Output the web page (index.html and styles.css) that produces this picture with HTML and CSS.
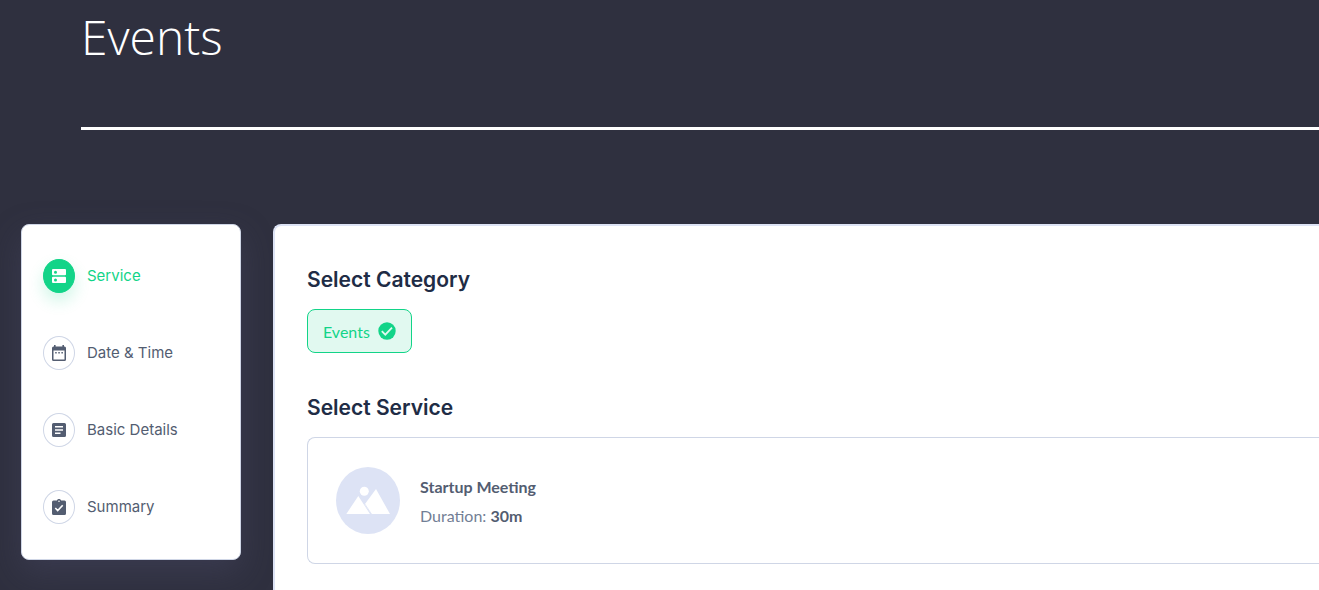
FILE: index.html
```html
<!DOCTYPE html>
<html lang="en">
<head>
<meta charset="utf-8">
<meta name="viewport" content="width=device-width, initial-scale=1">
<title>Events</title>
<link rel="stylesheet" href="styles.css">
</head>
<body>
<header class="page-header">
  <h1 class="page-title">Events</h1>
</header>
<div class="booking">
  <nav class="steps" aria-label="Booking steps">
    <a class="step step-active" href="#service">
      <span class="step-icon">
        <svg viewBox="0 0 14 14" aria-hidden="true"><path fill="currentColor" fill-rule="evenodd" d="M1 0h12a1 1 0 0 1 1 1v4.300a1 1 0 0 1-1 1H1a1 1 0 0 1-1-1V1a1 1 0 0 1 1-1zM3.500 1.700a1.500 1.500 0 1 0 0 3 1.500 1.500 0 0 0 0-3zM1 7.700h12a1 1 0 0 1 1 1V13a1 1 0 0 1-1 1H1a1 1 0 0 1-1-1V8.700a1 1 0 0 1 1-1zM3.500 9.400a1.500 1.500 0 1 0 0 3 1.500 1.500 0 0 0 0-3z"/></svg>
      </span>
      <span>Service</span>
    </a>
    <a class="step" href="#date">
      <span class="step-icon">
        <svg class="icon-tall" viewBox="0 0 14 16" aria-hidden="true"><path fill="currentColor" fill-rule="evenodd" d="M2 0h1.600v1.500h6.800V0H12v1.500h.5A1.500 1.500 0 0 1 14 3v11.500a1.500 1.500 0 0 1-1.500 1.500h-11A1.500 1.500 0 0 1 0 14.500V3a1.500 1.500 0 0 1 1.500-1.500H2zM1.500 5.500v9h11v-9zM3.200 7h1.500v1.600H3.200zm3.100 0h1.500v1.600H6.300zm3.100 0h1.500v1.600H9.400z"/></svg>
      </span>
      <span>Date &amp; Time</span>
    </a>
    <a class="step" href="#details">
      <span class="step-icon">
        <svg viewBox="0 0 14 14" aria-hidden="true"><path fill="currentColor" fill-rule="evenodd" d="M1.500 0h11A1.500 1.500 0 0 1 14 1.500v11a1.500 1.500 0 0 1-1.500 1.500h-11A1.500 1.500 0 0 1 0 12.500v-11A1.500 1.500 0 0 1 1.500 0zM3 3v1.500h8V3zm0 3.200v1.500h8V6.200zm0 3.200v1.500h5.500V9.400z"/></svg>
      </span>
      <span>Basic Details</span>
    </a>
    <a class="step" href="#summary">
      <span class="step-icon">
        <svg class="icon-tall" viewBox="0 0 14 16" aria-hidden="true"><path fill="currentColor" fill-rule="evenodd" d="M1.500 1.500h3.400a2.200 2.200 0 0 1 4.200 0h3.400A1.500 1.500 0 0 1 14 3v11.500a1.500 1.500 0 0 1-1.500 1.500h-11A1.500 1.500 0 0 1 0 14.500V3a1.500 1.500 0 0 1 1.500-1.500zM7 1.500A.8.8 0 1 0 7 3.100.8.800 0 0 0 7 1.500z"/><path d="M3.300 9l2.400 2.600 5-5.300" fill="none" stroke="#fff" stroke-width="1.600"/></svg>
      </span>
      <span>Summary</span>
    </a>
  </nav>
  <main class="panel">
    <section class="group">
      <h2 class="group-title">Select Category</h2>
      <button class="category" type="button" aria-pressed="true">
        <span>Events</span>
        <svg class="check" viewBox="0 0 18 18" aria-hidden="true"><circle cx="9" cy="9" r="8.700" fill="currentColor"/><path d="M3.800 9.200l3.500 3.500 6.700-7" fill="none" stroke="#e1f9f0" stroke-width="1.800"/></svg>
      </button>
    </section>
    <section class="group">
      <h2 class="group-title">Select Service</h2>
      <button class="service" type="button">
        <svg class="service-image" viewBox="0 0 64 67" aria-hidden="true"><ellipse cx="32" cy="33.500" rx="32" ry="33.500" fill="#dde3f5"/><circle cx="28.300" cy="24.200" r="4.500" fill="#fff"/><path fill="#fff" d="M10.300 47l12-18 11.700 18zM40 22l14 25H35.400l-6.800-9.500z"/><path d="M26.500 33.500L35.500 47" stroke="#dde3f5" stroke-width=".8"/></svg>
        <span class="service-text">
          <strong>Startup Meeting</strong>
          <span class="duration">Duration: <strong>30m</strong></span>
        </span>
      </button>
    </section>
  </main>
</div>
</body>
</html>
```
FILE: styles.css
```css
* { box-sizing: border-box; }
body {
  margin: 0;
  min-height: 100vh;
  display: flex;
  flex-direction: column;
  background: #2f303f;
  color: #535d71;
  font-family: Lato, "Noto Sans", sans-serif;
  font-size: 16px;
}
.page-header {
  margin-left: 81px;
  padding-bottom: 57px;
  border-bottom: 3px solid #fff;
}
.page-title {
  margin: 0;
  padding-top: 4px;
  font-family: "Open Sans", sans-serif;
  font-size: 48px;
  font-weight: 300;
  line-height: 66px;
  color: #fff;
}
.booking {
  flex: 1;
  display: flex;
  gap: 32px;
  padding: 94px 0 0 21px;
}
.steps {
  flex: 0 0 220px;
  align-self: flex-start;
  display: flex;
  flex-direction: column;
  gap: 43px;
  padding: 34px 21px 35px;
  background: #fff;
  border: 1px solid #cfd6e6;
  border-radius: 8px;
  box-shadow: 0 12px 32px #4a4c6866;
}
.step {
  display: flex;
  align-items: center;
  gap: 12px;
  color: #535d71;
  font-family: Inter, sans-serif;
  font-size: 15px;
  line-height: 20px;
  text-decoration: none;
}
.step-icon {
  width: 32px;
  height: 34px;
  display: grid;
  place-items: center;
  border: 1px solid #cfd6e6;
  border-radius: 50%;
}
.step-icon svg { width: 14px; height: 14px; }
.step-icon .icon-tall { height: 16px; }
.step-active { color: #12d488; }
.step-active .step-icon {
  color: #fff;
  background: #12d488;
  border-color: #12d488;
  box-shadow: 0 8px 16px #12d48833;
}
.panel {
  flex: 1;
  display: flex;
  flex-direction: column;
  gap: 40px;
  padding: 39px 0 26px 32px;
  background: #fff;
  border: 2px solid #dde3f5;
  border-width: 2px 0 0 2px;
  border-radius: 8px 0 0 0;
}
.group-title {
  margin: 0 0 14px;
  color: #202c45;
  font-family: Inter, sans-serif;
  font-size: 21px;
  font-weight: 600;
  line-height: 30px;
}
.category, .service {
  display: flex;
  align-items: center;
  font: inherit;
  border-radius: 8px;
}
.category {
  height: 44px;
  gap: 8px;
  padding: 0 15px;
  color: #12d488;
  background: #e1f9f0;
  border: 1px solid #12d488;
}
.check { width: 18px; height: 18px; }
.service {
  width: 100%;
  gap: 20px;
  padding: 29px 28px;
  color: #535d71;
  text-align: left;
  background: #fff;
  border: 1px solid #cfd6e6;
  border-right: 0;
  border-radius: 8px 0 0 8px;
}
.service-image { width: 64px; height: 67px; }
.service-text { display: grid; gap: 8px; line-height: 21px; }
.service-text strong { color: #535d71; font-weight: 700; }
.duration { color: #727e95; }
```
